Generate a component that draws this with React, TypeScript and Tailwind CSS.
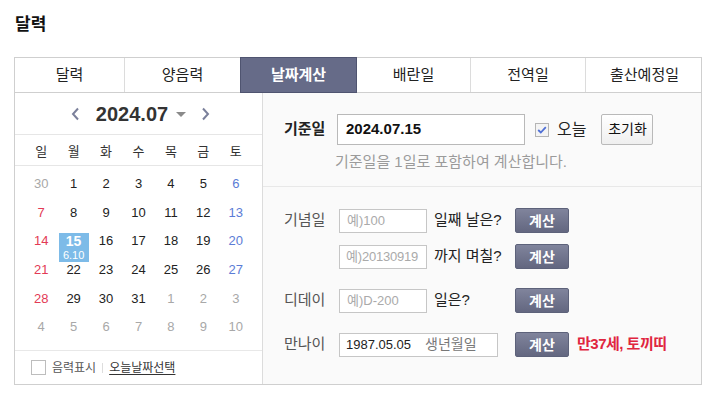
const tabs = [
  { label: "달력", w: "w-[110px]" },
  { label: "양음력", w: "w-[115px]" },
  { label: "날짜계산", w: "w-[117px]" },
  { label: "배란일", w: "w-[114px]" },
  { label: "전역일", w: "w-[115px]" },
  { label: "출산예정일", w: "w-[117px]" },
];
const weekDays = ["일", "월", "화", "수", "목", "금", "토"];

type Day = { d: number; out?: boolean };

const weeks: Day[][] = [
  [{ d: 30, out: true }, { d: 1 }, { d: 2 }, { d: 3 }, { d: 4 }, { d: 5 }, { d: 6 }],
  [{ d: 7 }, { d: 8 }, { d: 9 }, { d: 10 }, { d: 11 }, { d: 12 }, { d: 13 }],
  [{ d: 14 }, { d: 15 }, { d: 16 }, { d: 17 }, { d: 18 }, { d: 19 }, { d: 20 }],
  [{ d: 21 }, { d: 22 }, { d: 23 }, { d: 24 }, { d: 25 }, { d: 26 }, { d: 27 }],
  [{ d: 28 }, { d: 29 }, { d: 30 }, { d: 31 }, { d: 1, out: true }, { d: 2, out: true }, { d: 3, out: true }],
  [4, 5, 6, 7, 8, 9, 10].map((d) => ({ d, out: true })),
];

function dayColor(col: number, out?: boolean) {
  if (out) return "text-[#a8a8a8]";
  if (col === 0) return "text-[#e33a55]";
  if (col === 6) return "text-[#5b7cd6]";
  return "text-[#222]";
}

function Chevron({ dir }: { dir: "left" | "right" }) {
  return (
    <svg width="9" height="14" viewBox="0 0 9 14" fill="none">
      <polyline
        points={dir === "left" ? "7,1.5 2,7 7,12.5" : "2,1.5 7,7 2,12.5"}
        stroke="#7b809b"
        strokeWidth="2"
      />
    </svg>
  );
}

function CalcButton() {
  return (
    <button className="h-[25px] w-[54px] rounded-[2px] border border-[#5d627a] bg-gradient-to-b from-[#80849c] to-[#636780] text-[14px] font-bold leading-none text-white">
      계산
    </button>
  );
}

function Calendar() {
  return (
    <div className="w-[248px] shrink-0 border-r border-[#dcdcdc] bg-white">
      <div className="flex h-[42px] items-center justify-center border-b border-[#e6e6e6] pl-[4px]">
        <Chevron dir="left" />
        <span className="ml-[16px] text-[20px] font-bold leading-none text-[#333]">2024.07</span>
        <span className="ml-[8px] mt-[2px] h-0 w-0 border-x-[5px] border-t-[5px] border-x-transparent border-t-[#8a8a8a]" />
        <span className="ml-[15px]">
          <Chevron dir="right" />
        </span>
      </div>
      <div className="grid h-[31px] grid-cols-7 items-center border-b border-[#e6e6e6] px-[10px] pt-[3px] text-[13px] text-[#333]">
        {weekDays.map((w) => (
          <span key={w} className="text-center">
            {w}
          </span>
        ))}
      </div>
      <div className="px-[10px] pt-[3px] pb-[9px]">
        {weeks.map((week, i) => (
          <div key={i} className="grid h-[28.7px] grid-cols-7">
            {week.map((day, col) => {
              const today = !day.out && day.d === 15;
              return (
                <div key={col} className="flex h-[28.7px] justify-center pt-[7px]">
                  {today ? (
                    <div className="flex h-[29px] w-[30px] flex-col items-center bg-[#7dbbe8] text-white">
                      <span className="text-[14px] font-bold leading-[16px]">15</span>
                      <span className="text-[11px] leading-[12px]">6.10</span>
                    </div>
                  ) : (
                    <span className={`text-[13px] leading-[15px] ${dayColor(col, day.out)}`}>{day.d}</span>
                  )}
                </div>
              );
            })}
          </div>
        ))}
      </div>
      <div className="flex h-[34px] items-center border-t border-[#e8e8e8] px-[16px] text-[12px] text-[#555]">
        <span className="h-[15px] w-[15px] border border-[#bdbdbd] bg-white" />
        <span className="ml-[6px]">음력표시</span>
        <span className="mx-[6px] h-[10px] w-px bg-[#ddd]" />
        <span className="text-[#333] underline underline-offset-2">오늘날짜선택</span>
      </div>
    </div>
  );
}

function Calculator() {
  return (
    <div className="flex-1 bg-[#fafafa]">
      <div className="border-b border-[#e8e8e8] pt-[21px] pb-[15px] pl-[21px]">
        <div className="flex items-center">
          <span className="w-[53px] text-[15px] font-bold text-[#222]">기준일</span>
          <div className="flex h-[31px] w-[188px] items-center border border-[#b9b9b9] bg-white pl-[8px] text-[15px] font-bold text-[#111]">
            2024.07.15
          </div>
          <span className="ml-[10px] flex h-[14px] w-[14px] items-center justify-center border border-[#b5b5b5] bg-[#f4f4f4]">
            <svg width="10" height="8" viewBox="0 0 10 8" fill="none">
              <polyline points="1.2,4 3.8,6.5 8.8,1.2" stroke="#4f6fd6" strokeWidth="1.8" />
            </svg>
          </span>
          <span className="ml-[8px] text-[16px] text-[#222]">오늘</span>
          <button className="ml-[15px] h-[31px] w-[52px] rounded-[2px] border border-[#b9b9b9] bg-gradient-to-b from-white to-[#efefef] text-[14px] text-[#111]">
            초기화
          </button>
        </div>
        <p className="mt-[8px] pl-[51px] text-[15px] leading-[18px] text-[#9b9b9b]">
          기준일을 1일로 포함하여 계산합니다.
        </p>
      </div>
      <div className="flex flex-col pt-[21px] pl-[21px] text-[15px]">
        <div className="flex items-start">
          <span className="w-[55px] leading-[24px] text-[#555]">기념일</span>
          <div className="flex flex-col gap-[11px]">
            <div className="flex items-center">
              <div className="flex h-[24px] w-[88px] items-center border border-[#c6c6c6] bg-white pl-[7px] text-[13px] text-[#aaa]">
                예)100
              </div>
              <span className="ml-[7px] w-[81px] text-[#222]">일째 날은?</span>
              <CalcButton />
            </div>
            <div className="flex items-center">
              <div className="flex h-[24px] w-[88px] items-center border border-[#c6c6c6] bg-white pl-[6px] text-[13px] tracking-[-0.2px] text-[#aaa]">
                예)20130919
              </div>
              <span className="ml-[7px] w-[81px] text-[#222]">까지 며칠?</span>
              <CalcButton />
            </div>
          </div>
        </div>
        <div className="mt-[19px] flex items-center">
          <span className="w-[55px] text-[#555]">디데이</span>
          <div className="flex h-[24px] w-[88px] items-center border border-[#c6c6c6] bg-white pl-[7px] text-[13px] text-[#aaa]">
            예)D-200
          </div>
          <span className="ml-[7px] w-[81px] text-[#222]">일은?</span>
          <CalcButton />
        </div>
        <div className="mt-[19px] flex items-center">
          <span className="w-[55px] text-[#555]">만나이</span>
          <div className="flex h-[24px] w-[159px] items-center border border-[#c6c6c6] bg-white pl-[6px] text-[13px] text-[#222]">
            1987.05.05
            <span className="ml-[14px] text-[14px] text-[#777]">생년월일</span>
          </div>
          <span className="ml-[17px]">
            <CalcButton />
          </span>
          <span className="ml-[8px] text-[15px] font-bold tracking-[-0.5px] text-[#e0253f]">만37세, 토끼띠</span>
        </div>
      </div>
    </div>
  );
}

export default function App() {
  return (
    <div className="min-h-[399px] bg-white px-[14px] pt-[14px] font-['Liberation_Sans','Noto_Sans_CJK_KR',sans-serif] text-[#222]">
      <h1 className="pl-[1px] text-[17px] font-bold leading-[22px] text-[#111]">달력</h1>
      <div className="mt-[21px] w-[688px]">
        <div className="flex h-[36px] border border-[#cfcfcf]">
          {tabs.map((t, i) => (
            <div
              key={t.label}
              className={
                i === 2
                  ? `-my-px flex shrink-0 items-center justify-center border border-[#4f5470] bg-[#666b88] text-[15px] font-bold text-white ${t.w}`
                  : `flex shrink-0 items-center justify-center text-[15px] text-[#222] ${t.w} ${i < 5 && i !== 1 ? "border-r border-[#dcdcdc]" : ""}`
              }
            >
              {t.label}
            </div>
          ))}
        </div>
        <div className="flex h-[292px] border-x border-b border-[#cfcfcf]">
          <Calendar />
          <Calculator />
        </div>
      </div>
    </div>
  );
}
